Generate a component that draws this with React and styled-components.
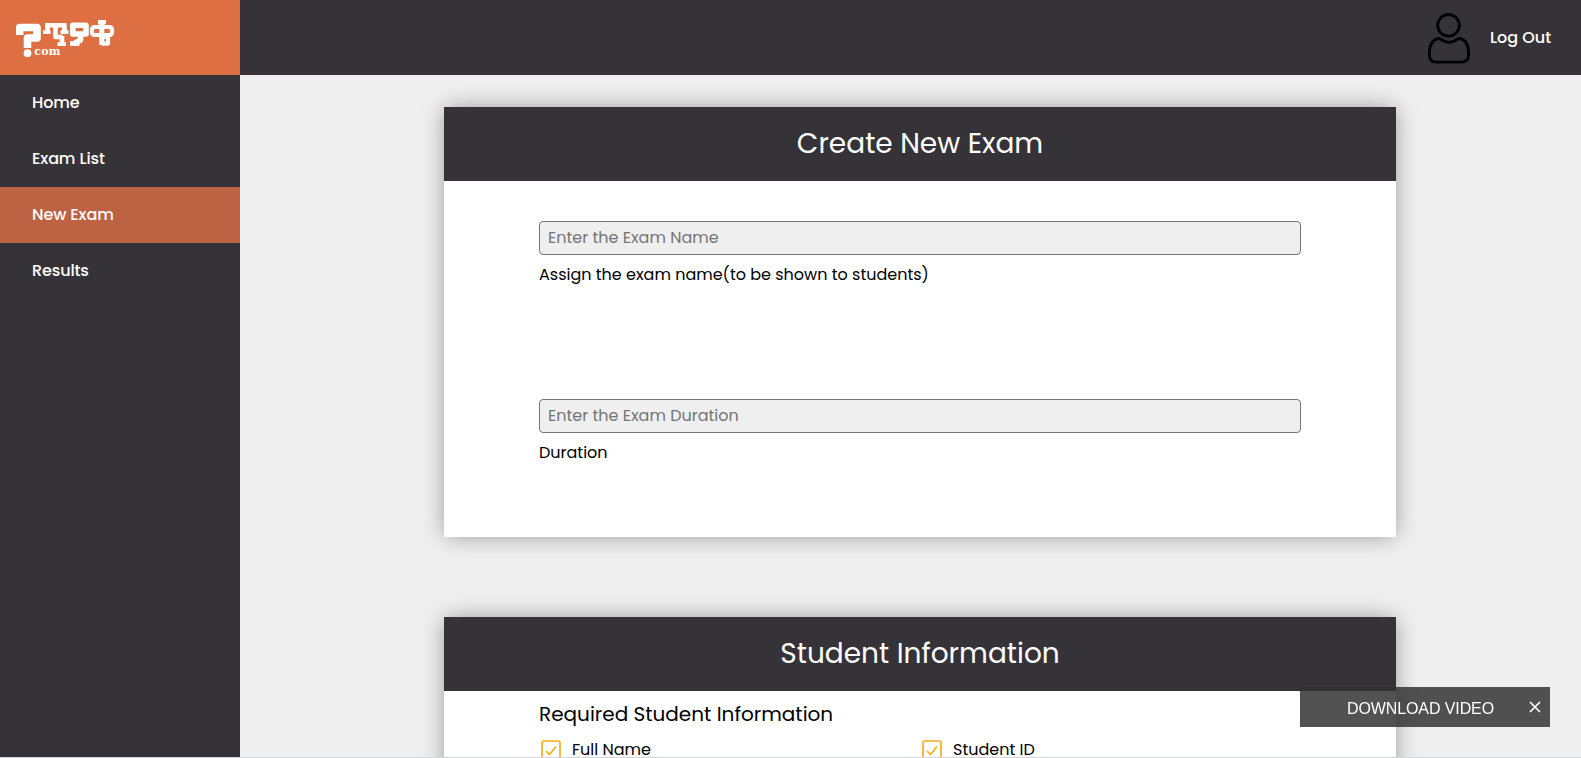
import React from "react";
import styled, { createGlobalStyle } from "styled-components";

const GlobalStyle = createGlobalStyle`
  * { box-sizing: border-box; }
  html, body { margin: 0; height: 100%; overflow: hidden; }
  body { background: #efefef; color: #000; font: 16px/24px Poppins, Inter, sans-serif; }
`;

const Page = styled.div`
  display: grid;
  grid-template: 75px 1fr / 240px 1fr;
  height: 757px;
  overflow: hidden;
`;

const LogoBox = styled.div`
  background: #de6f43;
  padding: 20px 0 0 16px;
`;

const TopBar = styled.header`
  background: #363338;
  display: flex;
  justify-content: flex-end;
  align-items: center;
  padding-right: 30px;
  gap: 20px;
`;

const UserIcon = styled.svg`
  display: block;
  width: 42px;
  height: 51px;
  margin-top: 1px;
`;

const Label = styled.span`
  display: block;
  white-space: nowrap;
`;

const TopLink = styled.a`
  color: #fff;
  font-weight: 500;
  width: 61px;
`;

const Sidebar = styled.nav`
  background: #363338;
`;

const NavItem = styled.a`
  display: flex;
  align-items: center;
  height: 56px;
  padding-left: 32px;
  color: #fff;
  font-weight: 500;
  letter-spacing: -0.12px;
  background: ${(p) => (p.$active ? "#bd6242" : "transparent")};
`;

const Main = styled.main`
  display: flex;
  flex-direction: column;
  align-items: center;
  gap: 80px;
  padding: 32px 0 0 19px;
  overflow: hidden;
`;

const Card = styled.section`
  width: 952px;
  height: 430px;
  flex: none;
  background: #fff;
  box-shadow: 0 0 22px -2px rgba(0, 0, 0, 0.4);
`;

const CardTitle = styled.h2`
  margin: 0;
  height: 74px;
  display: flex;
  align-items: center;
  justify-content: center;
  background: #363338;
  color: #fff;
  font-size: 28px;
  font-weight: 400;
`;

const CardBody = styled.div`
  padding: ${(p) => p.$top}px 95px 0;
`;

const Field = styled.label`
  display: block;
  height: 178px;
`;

const Input = styled.input`
  display: block;
  width: 100%;
  height: 34px;
  margin-bottom: 8px;
  padding: 0 8px 2px;
  border: 1px solid #767676;
  border-radius: 4px;
  background: #efefef;
  font: inherit;
  &::placeholder { color: #757575; }
`;

const SubHeading = styled.h3`
  margin: 0 0 9px;
  font-size: 20px;
  line-height: 30px;
  font-weight: 400;
`;

const Options = styled.div`
  display: grid;
  grid-template-columns: 1fr 1fr;
`;

const Option = styled.div`
  display: flex;
  align-items: center;
  gap: 10px;
  padding-left: 2px;
`;

const CheckIcon = styled.svg`
  width: 21px;
  height: 21px;
`;

const DownloadBar = styled.div`
  position: fixed;
  left: 1300px;
  top: 687px;
  width: 250px;
  height: 40px;
  display: flex;
  align-items: center;
  justify-content: flex-end;
  gap: 35px;
  padding: 3px 9px 0 0;
  background: rgba(49, 49, 49, 0.84);
  color: #fff;
  font: 16px/20px "Liberation Sans", sans-serif;
  letter-spacing: -0.1px;
`;

const CloseIcon = styled.svg`
  width: 12px;
  height: 12px;
  margin-top: -4px;
`;

const BottomEdge = styled.div`
  height: 1px;
  background: #d4d5dc;
`;

function Logo() {
  return (
    <svg width="100" height="38" viewBox="16 20 100 38" fill="none" stroke="#fff" strokeLinejoin="round">
      <path d="M19.7 35V27.5H37V38H27.5V48" strokeWidth="7.6" />
      <circle cx="27.5" cy="53.2" r="3.9" fill="#fff" stroke="none" />
      <g strokeWidth="4.6">
        <path d="M45 25.2H66.5M47.5 25V32M55.5 25V37H62.5M64.5 25V32M62 36V44" />
        <path d="M43 32.2H50.5M60.5 32.2H68.5M57.5 44.2H66" strokeWidth="3.8" />
      </g>
      <g strokeWidth="5.6">
        <path d="M72.8 25.3H86V34H72.8ZM80.5 35V40L75 43" />
        <path d="M70 43.5H79.5" strokeWidth="4.8" />
      </g>
      <g strokeWidth="4.2">
        <rect x="92" y="27" width="20" height="8" rx="2.5" />
        <path d="M98 22.2H106M101.8 37H108V43.6H101.8" />
        <path d="M101.8 21V45" strokeWidth="5" />
      </g>
      <text x="34.3" y="55.4" fill="#fff" stroke="none" fontFamily="DejaVu Serif, serif" fontWeight="700" fontSize="11" textLength="26">com</text>
    </svg>
  );
}

const Check = () => (
  <CheckIcon viewBox="0 0 21 21" fill="none" stroke="#fcab1c" strokeWidth="1.7">
    <rect x="1" y="1" width="18" height="19" rx="2" />
    <path d="m5 11 3.5 3.5L15 6.5" />
  </CheckIcon>
);

export default function App() {
  return (
    <>
      <GlobalStyle />
      <Page>
        <LogoBox><Logo /></LogoBox>
        <TopBar>
          <UserIcon viewBox="0 0 42 51" fill="none" stroke="#000" strokeWidth="2.9">
            <circle cx="20.5" cy="12.3" r="10.8" />
            <path d="M10 25.5C4 27 1.4 33 1.4 40V42Q1.4 49.1 8.5 49.1H33.5Q40.5 49.1 40.5 42V40C40.5 33 38 27 32 25.5Q30 25.3 28.5 26.8Q21 32 13.5 26.8Q12 25.3 10 25.5Z" />
          </UserIcon>
          <TopLink><Label>Log Out</Label></TopLink>
        </TopBar>
        <Sidebar>
          <NavItem><Label>Home</Label></NavItem>
          <NavItem><Label>Exam List</Label></NavItem>
          <NavItem $active><Label>New Exam</Label></NavItem>
          <NavItem><Label>Results</Label></NavItem>
        </Sidebar>
        <Main>
          <Card>
            <CardTitle><Label>Create New Exam</Label></CardTitle>
            <CardBody $top={40}>
              <Field>
                <Input placeholder="Enter the Exam Name" />
                <Label>Assign the exam name(to be shown to students)</Label>
              </Field>
              <Field>
                <Input placeholder="Enter the Exam Duration" />
                <Label>Duration</Label>
              </Field>
            </CardBody>
          </Card>
          <Card>
            <CardTitle><Label>Student Information</Label></CardTitle>
            <CardBody $top={8}>
              <SubHeading><Label>Required Student Information</Label></SubHeading>
              <Options>
                <Option><Check /><Label>Full Name</Label></Option>
                <Option><Check /><Label>Student ID</Label></Option>
              </Options>
            </CardBody>
          </Card>
        </Main>
      </Page>
      <BottomEdge />
      <DownloadBar>
        <span>DOWNLOAD VIDEO</span>
        <CloseIcon viewBox="0 0 12 12" stroke="#fff" strokeWidth="1.7"><path d="M1 1 11 11M11 1 1 11" /></CloseIcon>
      </DownloadBar>
    </>
  );
}
